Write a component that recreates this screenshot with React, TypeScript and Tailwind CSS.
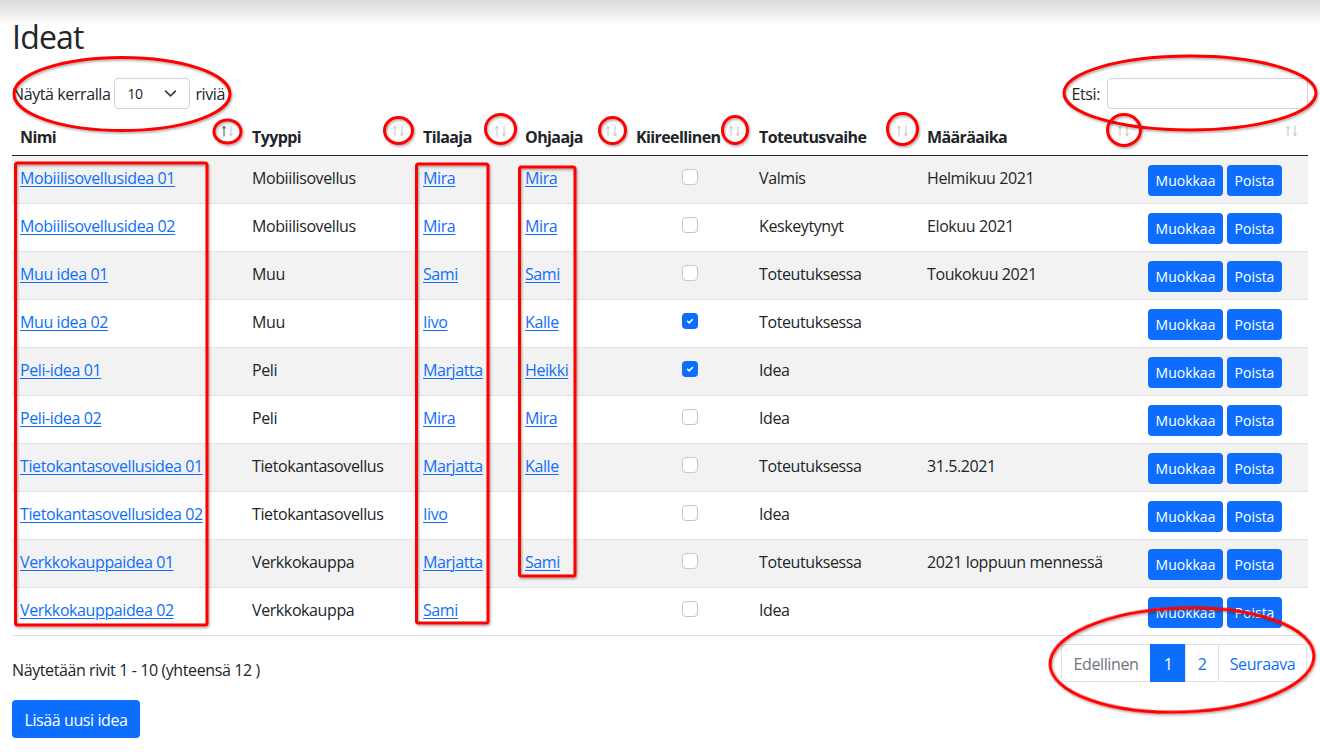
import React from "react";

type Row = {
  nimi: string;
  tyyppi: string;
  tilaaja: string;
  ohjaaja: string;
  kiire: boolean;
  vaihe: string;
  maara: string;
};

const rows: Row[] = [
  { nimi: "Mobiilisovellusidea 01", tyyppi: "Mobiilisovellus", tilaaja: "Mira", ohjaaja: "Mira", kiire: false, vaihe: "Valmis", maara: "Helmikuu 2021" },
  { nimi: "Mobiilisovellusidea 02", tyyppi: "Mobiilisovellus", tilaaja: "Mira", ohjaaja: "Mira", kiire: false, vaihe: "Keskeytynyt", maara: "Elokuu 2021" },
  { nimi: "Muu idea 01", tyyppi: "Muu", tilaaja: "Sami", ohjaaja: "Sami", kiire: false, vaihe: "Toteutuksessa", maara: "Toukokuu 2021" },
  { nimi: "Muu idea 02", tyyppi: "Muu", tilaaja: "Iivo", ohjaaja: "Kalle", kiire: true, vaihe: "Toteutuksessa", maara: "" },
  { nimi: "Peli-idea 01", tyyppi: "Peli", tilaaja: "Marjatta", ohjaaja: "Heikki", kiire: true, vaihe: "Idea", maara: "" },
  { nimi: "Peli-idea 02", tyyppi: "Peli", tilaaja: "Mira", ohjaaja: "Mira", kiire: false, vaihe: "Idea", maara: "" },
  { nimi: "Tietokantasovellusidea 01", tyyppi: "Tietokantasovellus", tilaaja: "Marjatta", ohjaaja: "Kalle", kiire: false, vaihe: "Toteutuksessa", maara: "31.5.2021" },
  { nimi: "Tietokantasovellusidea 02", tyyppi: "Tietokantasovellus", tilaaja: "Iivo", ohjaaja: "", kiire: false, vaihe: "Idea", maara: "" },
  { nimi: "Verkkokauppaidea 01", tyyppi: "Verkkokauppa", tilaaja: "Marjatta", ohjaaja: "Sami", kiire: false, vaihe: "Toteutuksessa", maara: "2021 loppuun mennessä" },
  { nimi: "Verkkokauppaidea 02", tyyppi: "Verkkokauppa", tilaaja: "Sami", ohjaaja: "", kiire: false, vaihe: "Idea", maara: "" },
];

function SortIcon({ active }: { active?: boolean }) {
  const up = active ? "#4a4a4a" : "#c4c4c4";
  const down = "#c4c4c4";
  return (
    <svg
      className="absolute right-[10px] top-[10px]"
      width="12"
      height="12"
      viewBox="0 0 12 12"
      fill="none"
      strokeWidth="1"
    >
      <path d="M2 1.2V11.5M0.3 3.6L2 1.2L3.7 3.6" stroke={up} />
      <path d="M9 0.5V10.8M7.3 8.4L9 10.8L10.7 8.4" stroke={down} />
    </svg>
  );
}

function Th({ label, active }: { label: string; active?: boolean }) {
  return (
    <th className="relative pl-2 pr-[26px] pt-[10px] pb-[6px] text-left font-bold leading-6 tracking-[-0.6px] border-b border-[#212529] whitespace-nowrap">
      {label}
      <SortIcon active={active} />
    </th>
  );
}

function Checkbox({ checked }: { checked: boolean }) {
  if (checked) {
    return (
      <span className="flex h-4 w-4 items-center justify-center rounded-[4px] bg-[#0d6efd]">
        <svg width="10" height="10" viewBox="0 0 20 20" fill="none">
          <path d="M5 10.5l3.2 3.2L15 7" stroke="#fff" strokeWidth="3" strokeLinecap="round" strokeLinejoin="round" />
        </svg>
      </span>
    );
  }
  return <span className="block h-4 w-4 rounded-[4px] border border-[#c6c6c6] bg-white" />;
}

function Link({ children }: { children: React.ReactNode }) {
  return <a className="text-[#0d6efd] underline underline-offset-[2px] decoration-1">{children}</a>;
}

function Annotations() {
  const red = "#ff0000";
  const common = { fill: "none", stroke: red, strokeWidth: 3, filter: "url(#sh)" } as const;
  return (
    <svg
      className="pointer-events-none absolute left-0 top-0"
      width="1320"
      height="754"
      viewBox="0 0 1320 754"
    >
      <defs>
        <filter id="sh" x="-20%" y="-20%" width="140%" height="140%">
          <feDropShadow dx="1" dy="1.5" stdDeviation="1" floodColor="#000" floodOpacity="0.35" />
        </filter>
      </defs>
      <ellipse cx="122" cy="94" rx="108" ry="36.5" {...common} />
      <ellipse cx="1190" cy="93" rx="126" ry="37" {...common} />
      <ellipse cx="1182" cy="660" rx="132" ry="52" transform="rotate(-2 1182 660)" {...common} />
      <ellipse cx="227.5" cy="131.5" rx="13.5" ry="11.5" {...common} />
      <ellipse cx="398.5" cy="130.5" rx="14" ry="13" {...common} />
      <ellipse cx="500.5" cy="129" rx="15" ry="14.5" {...common} />
      <ellipse cx="612.5" cy="130.5" rx="13" ry="13" {...common} />
      <ellipse cx="735" cy="130" rx="12.5" ry="13.5" {...common} />
      <ellipse cx="902.5" cy="129" rx="15" ry="15.5" {...common} />
      <ellipse cx="1124" cy="130" rx="16.5" ry="15.5" {...common} />
      <rect x="15.5" y="163" width="191.5" height="462" rx="2" {...common} />
      <rect x="416.5" y="164" width="71.5" height="459" rx="2" {...common} />
      <rect x="519.5" y="167" width="55.5" height="409" rx="2" {...common} />
    </svg>
  );
}

const td = "border-b border-[#dee2e6] px-2 pt-[10px] pb-[6px] align-top leading-6 whitespace-nowrap";

export default function App() {
  return (
    <div className="relative h-[754px] w-[1320px] overflow-hidden bg-white px-3 font-['Open_Sans',sans-serif] text-[16px] text-[#212529]">
      <div className="pointer-events-none absolute left-0 top-0 h-[26px] w-full bg-linear-to-b from-[#d9d9d9] to-[#ffffff00]" />

      <h2 className="mt-[18px] text-[32px] font-normal leading-[38px] tracking-[-0.8px]">Ideat</h2>

      <div className="mt-[22px] flex h-[31px] items-center justify-between tracking-[-0.4px]">
        <div className="flex items-center">
          <span className="leading-6">Näytä kerralla</span>
          <div className="ml-[4px] flex h-[31px] w-[76px] items-center justify-between rounded-[4px] border border-[#ced4da] pl-[12px] pr-[12px] text-[14px]">
            <span>10</span>
            <svg width="13" height="9" viewBox="0 0 16 10" fill="none">
              <path d="M2 2l6 6 6-6" stroke="#343a40" strokeWidth="2" strokeLinecap="round" strokeLinejoin="round" />
            </svg>
          </div>
          <span className="ml-[5px] leading-6">riviä</span>
        </div>
        <div className="flex items-center">
          <span className="leading-6">Etsi:</span>
          <div className="ml-[7px] h-[31px] w-[201px] rounded-[4px] border border-[#ced4da] bg-white" />
        </div>
      </div>

      <table className="mt-[6px] w-[1296px] table-fixed border-collapse">
        <colgroup>
          <col className="w-[232px]" />
          <col className="w-[171px]" />
          <col className="w-[102px]" />
          <col className="w-[111px]" />
          <col className="w-[123px]" />
          <col className="w-[168px]" />
          <col className="w-[221px]" />
          <col className="w-[168px]" />
        </colgroup>
        <thead>
          <tr>
            <Th label="Nimi" active />
            <Th label="Tyyppi" />
            <Th label="Tilaaja" />
            <Th label="Ohjaaja" />
            <Th label="Kiireellinen" />
            <Th label="Toteutusvaihe" />
            <Th label="Määräaika" />
            <Th label="" />
          </tr>
        </thead>
        <tbody className="tracking-[-0.4px]">
          {rows.map((r, i) => (
            <tr key={r.nimi} className={i % 2 === 0 ? "bg-[#f2f2f2]" : "bg-white"}>
              <td className={td}>
                <Link>{r.nimi}</Link>
              </td>
              <td className={td}>{r.tyyppi}</td>
              <td className={td}>
                <Link>{r.tilaaja}</Link>
              </td>
              <td className={td}>{r.ohjaaja ? <Link>{r.ohjaaja}</Link> : null}</td>
              <td className="border-b border-[#dee2e6] px-2 pt-[8px] pb-[8px] align-top leading-6">
                <div className="flex justify-center pt-[5px]">
                  <Checkbox checked={r.kiire} />
                </div>
              </td>
              <td className={td}>{r.vaihe}</td>
              <td className={td}>{r.maara}</td>
              <td className="border-b border-[#dee2e6] px-2 pt-[9px] pb-[7px] align-top">
                <div className="flex gap-[4px] tracking-normal">
                  <span className="flex h-[31px] w-[75px] items-center justify-center rounded-[4px] bg-[#0d6efd] text-[14px] text-white">Muokkaa</span>
                  <span className="flex h-[31px] w-[55px] items-center justify-center rounded-[4px] bg-[#0d6efd] text-[14px] text-white">Poista</span>
                </div>
              </td>
            </tr>
          ))}
        </tbody>
      </table>

      <div className="mt-[8px] flex items-start justify-between tracking-[-0.4px]">
        <div className="pt-[14px] leading-6">Näytetään rivit 1 - 10 (yhteensä 12 )</div>
        <div className="mr-[1px] flex h-[38px]">
          <span className="flex w-[90px] items-center justify-center rounded-l-[4px] border border-[#dee2e6] pt-[1px] text-[#6c757d]">Edellinen</span>
          <span className="-ml-px flex w-[36px] items-center justify-center border border-[#0d6efd] bg-[#0d6efd] pt-[1px] text-white">1</span>
          <span className="-ml-px flex w-[34px] items-center justify-center border border-[#dee2e6] pt-[1px] text-[#0d6efd]">2</span>
          <span className="-ml-px flex w-[89px] items-center justify-center rounded-r-[4px] border border-[#dee2e6] pt-[1px] text-[#0d6efd]">Seuraava</span>
        </div>
      </div>

      <div className="mt-[18px] flex h-[38px] w-[128px] items-center justify-center rounded-[4px] bg-[#0d6efd] pt-[1px] tracking-[-0.4px] text-white">
        Lisää uusi idea
      </div>

      <Annotations />
    </div>
  );
}
